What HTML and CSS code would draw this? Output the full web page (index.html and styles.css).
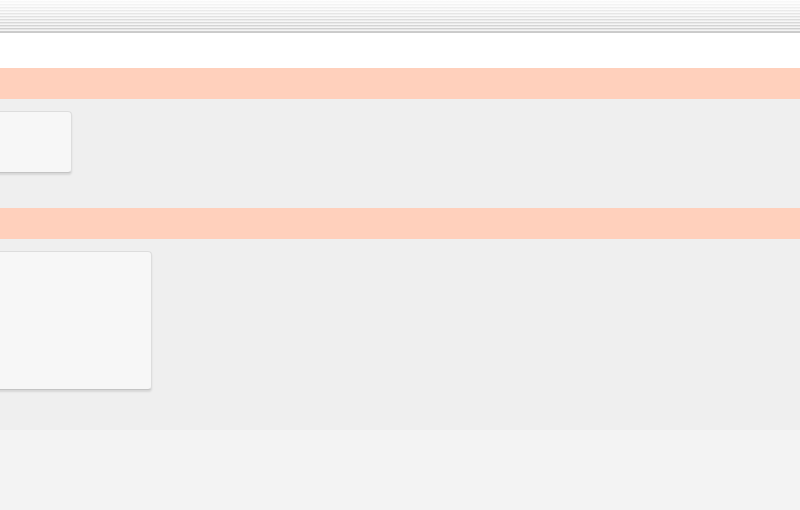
FILE: index.html
```html
<!DOCTYPE html>
<html>
<head>
<meta charset="utf-8">
<link rel="stylesheet" href="styles.css">
</head>
<body>
<div class="page">
  <div class="stripes"></div>
  <div class="white-bar"></div>
  <div class="band"></div>
  <div class="section sec-one">
    <div class="card card-small"></div>
  </div>
  <div class="band"></div>
  <div class="section sec-two">
    <div class="card card-large"></div>
  </div>
  <div class="footer"></div>
</div>
</body>
</html>
```
FILE: styles.css
```css
html, body {
  margin: 0;
  padding: 0;
  background: #f3f3f3;
  font-family: "Liberation Sans", Arial, sans-serif;
  overflow: hidden;
}
.page {
  width: 800px;
  height: 510px;
  display: flex;
  flex-direction: column;
}
.stripes {
  height: 33px;
  background:
    linear-gradient(to bottom, rgba(255,255,255,0.9) 0%, rgba(255,255,255,0.45) 50%, rgba(255,255,255,0) 100%),
    repeating-linear-gradient(to bottom, #f4f4f4 0px, #f4f4f4 1px, #cbcbcb 1px, #cbcbcb 2px, #e4e4e4 2px, #e4e4e4 3px);
  border-bottom: 1px solid #cacaca;
  box-sizing: border-box;
}
.white-bar {
  height: 35px;
  background: #ffffff;
}
.band {
  height: 31px;
  background: #ffd0bc;
}
.section {
  background: #efefef;
  padding-top: 12px;
  box-sizing: border-box;
}
.sec-one { height: 109px; }
.sec-two { height: 191px; }
.card {
  background: #f7f7f7;
  border: 1px solid #dddddd;
  border-bottom-color: #c4c4c4;
  border-radius: 4px;
  box-shadow: 0 2px 2px rgba(0,0,0,0.1);
  margin-left: -20px;
  box-sizing: border-box;
}
.card-small {
  width: 92px;
  height: 62px;
}
.card-large {
  width: 172px;
  height: 139px;
}
.footer {
  flex: 1;
  background: #f3f3f3;
}
```
